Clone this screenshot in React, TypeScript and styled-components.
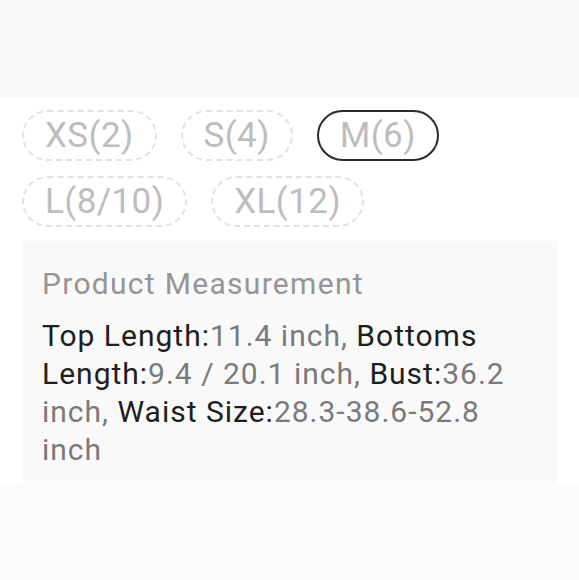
import React from 'react';
import styled, { createGlobalStyle } from 'styled-components';

const GlobalStyle = createGlobalStyle`
  html, body {
    margin: 0;
    padding: 0;
    height: 100%;
    background: #ffffff;
  }
  #root {
    height: 100%;
  }
  * {
    box-sizing: border-box;
  }
`;

const sizes = [
  { label: 'XS(2)', selected: false },
  { label: 'S(4)', selected: false },
  { label: 'M(6)', selected: true },
  { label: 'L(8/10)', selected: false },
  { label: 'XL(12)', selected: false },
];

const measurements = [
  { name: 'Top Length', value: '11.4 inch' },
  { name: 'Bottoms Length', value: '9.4 / 20.1 inch' },
  { name: 'Bust', value: '36.2 inch' },
  { name: 'Waist Size', value: '28.3-38.6-52.8 inch' },
];

const App = () => {
  return (
    <Page>
      <GlobalStyle />
      <TopBand />
      <Section>
        <ChipList>
          {sizes.map((s) => (
            <Chip key={s.label} $selected={s.selected}>
              {s.label}
            </Chip>
          ))}
        </ChipList>
        <MeasureBox>
          <MeasureTitle>Product Measurement</MeasureTitle>
          <MeasureText>
            {measurements.map((m, i) => (
              <React.Fragment key={m.name}>
                <Key>{m.name}:</Key>
                {m.value}
                {i < measurements.length - 1 ? ', ' : ''}
              </React.Fragment>
            ))}
          </MeasureText>
        </MeasureBox>
      </Section>
      <BottomBand />
    </Page>
  );
};

export default App;

const Page = styled.div`
  display: flex;
  flex-direction: column;
  min-height: 100vh;
  font-family: Roboto, 'Liberation Sans', sans-serif;
`;

const TopBand = styled.div`
  height: 98px;
  background: #fafafa;
`;

const Section = styled.div`
  background: #ffffff;
  padding-top: 12px;
`;

const ChipList = styled.div`
  display: flex;
  flex-wrap: wrap;
  gap: 15px 24px;
  padding: 0 22px;
  width: 480px;
`;

const Chip = styled.div<{ $selected: boolean }>`
  display: inline-flex;
  align-items: center;
  justify-content: center;
  height: 51px;
  padding: 0 21px;
  border-radius: 26px;
  border: 2px ${(p) => (p.$selected ? 'solid #2b2b2b' : 'dashed #e2e2e2')};
  color: #bdbdbd;
  font-size: 35px;
  letter-spacing: 0.4px;
  line-height: 1;
  white-space: nowrap;
`;

const MeasureBox = styled.div`
  margin: 14px 22px 0;
  background: #f9f9f9;
  padding: 24px 20px 14px;
`;

const MeasureTitle = styled.div`
  color: #959595;
  font-size: 30px;
  letter-spacing: 1.3px;
  line-height: 38px;
`;

const MeasureText = styled.div`
  margin-top: 14px;
  color: #7a7a7a;
  font-size: 30px;
  letter-spacing: 1px;
  line-height: 38px;
`;

const Key = styled.span`
  color: #1e1e1e;
`;

const BottomBand = styled.div`
  flex: 1;
  background: #fbfbfb;
`;
